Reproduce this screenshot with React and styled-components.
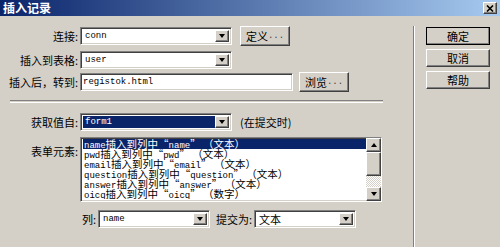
import styled, { createGlobalStyle } from "styled-components";

const GlobalStyle = createGlobalStyle`
  body {
    margin: 0;
    background: #d4d0c8;
  }
`;

const cjk = `"Noto Sans CJK SC", "Noto Sans", sans-serif`;
const mono = `"Liberation Mono", "Noto Sans CJK SC", monospace`;

const sunken = `
  border-style: solid;
  border-width: 1px;
  border-color: #808080 #ffffff #ffffff #808080;
  box-shadow: inset 1px 1px 0 #404040, inset -1px -1px 0 #d4d0c8;
`;

const raised = `
  border-style: solid;
  border-width: 1px;
  border-color: #ffffff #404040 #404040 #ffffff;
  box-shadow: inset -1px -1px 0 #808080, inset 1px 1px 0 #d4d0c8;
`;

const Window = styled.div`
  width: 500px;
  height: 247px;
  background: #d4d0c8;
  display: flex;
  flex-direction: column;
  overflow: hidden;
  font-family: ${cjk};
  font-size: 11px;
  color: #000;
`;

const TitleBar = styled.div`
  height: 16px;
  flex: none;
  display: flex;
  align-items: center;
  justify-content: space-between;
  padding: 0 3px 0 3px;
  background: linear-gradient(to right, #0a246a, #a6caf0);
`;

const Title = styled.span`
  color: #fff;
  font-weight: bold;
  font-size: 12px;
  line-height: 16px;
`;

const CloseBtn = styled.div`
  ${raised}
  width: 12px;
  height: 10px;
  background: #d4d0c8;
  display: flex;
  align-items: center;
  justify-content: center;
`;

const Body = styled.div`
  flex: 1;
  display: flex;
`;

const Main = styled.div`
  width: 413px;
  flex: none;
  padding-top: 10px;
  display: flex;
  flex-direction: column;
`;

const Row = styled.div`
  display: flex;
  align-items: ${(p) => (p.$top ? "flex-start" : "center")};
  margin-top: ${(p) => p.$mt || 0}px;
  padding-left: ${(p) => p.$indent || 0}px;
`;

const Label = styled.div`
  width: ${(p) => p.$w || 78}px;
  margin-right: ${(p) => (p.$mr === undefined ? 2 : p.$mr)}px;
  margin-left: ${(p) => p.$ml || 0}px;
  text-align: right;
  white-space: nowrap;
  line-height: 14px;
  padding-top: ${(p) => p.$pt || 0}px;
  flex: none;
`;

const Select = styled.div`
  ${sunken}
  width: ${(p) => p.$w}px;
  height: 18px;
  box-sizing: border-box;
  background: #fff;
  display: flex;
  align-items: stretch;
  padding: 2px;
  flex: none;
`;

const Value = styled.div`
  flex: 1;
  display: flex;
  align-items: center;
  padding-left: 2px;
  font-family: ${(p) => (p.$cjk ? cjk : mono)};
  font-size: ${(p) => (p.$cjk ? 11 : 9)}px;
  background: ${(p) => (p.$active ? "#0a246a" : "transparent")};
  color: ${(p) => (p.$active ? "#fff" : "#000")};
  white-space: nowrap;
  overflow: hidden;
`;

const ArrowBtn = styled.div`
  ${raised}
  width: 14px;
  box-sizing: border-box;
  background: #d4d0c8;
  display: flex;
  align-items: center;
  justify-content: center;
  flex: none;
`;

const Triangle = styled.span`
  width: 0;
  height: 0;
  border-left: 3.5px solid transparent;
  border-right: 3.5px solid transparent;
  ${(p) => (p.$up ? "border-bottom" : "border-top")}: 4px solid #000;
`;

const TextInput = styled.div`
  ${sunken}
  width: ${(p) => p.$w}px;
  height: 18px;
  box-sizing: border-box;
  background: #fff;
  display: flex;
  align-items: center;
  padding-left: 2px;
  font-family: ${mono};
  font-size: 9px;
  flex: none;
`;

const Button = styled.div`
  ${raised}
  width: ${(p) => p.$w || 64}px;
  height: ${(p) => p.$h || 20}px;
  margin-left: ${(p) => p.$ml || 0}px;
  box-sizing: border-box;
  background: #d4d0c8;
  display: flex;
  align-items: center;
  justify-content: center;
  font-size: 11px;
  flex: none;
  ${(p) =>
    p.$default &&
    `
    outline: 1px solid #000;
    outline-offset: -1px;
  `}
`;

const Dots = styled.span`
  font-family: ${mono};
  font-size: 9px;
  color: #404040;
`;

const HSeparator = styled.div`
  margin: 8px 0 0 10px;
  width: 373px;
  height: 1px;
  border-top: 1px solid #808080;
  border-bottom: 1px solid #ffffff;
`;

const Note = styled.span`
  white-space: nowrap;
  margin-left: 8px;
`;

const ListBox = styled.div`
  ${sunken}
  width: 302px;
  height: 65px;
  box-sizing: border-box;
  background: #fff;
  display: flex;
  padding: 1px 0 2px 2px;
  flex: none;
`;

const Items = styled.div`
  flex: 1;
  min-width: 0;
  overflow-x: hidden;
`;

const Item = styled.div`
  height: 10px;
  line-height: 10px;
  font-size: 10.5px;
  white-space: nowrap;
  padding-left: 1px;
  background: ${(p) => (p.$selected ? "#0a246a" : "transparent")};
  color: ${(p) => (p.$selected ? "#fff" : "#000")};
`;

const Mono = styled.span`
  font-family: ${mono};
  font-size: 9px;
  line-height: 10px;
`;

const Scrollbar = styled.div`
  width: 15px;
  margin-top: -1px;
  margin-bottom: -2px;
  display: flex;
  flex-direction: column;
  flex: none;
  background: repeating-conic-gradient(#ffffff 0 25%, #d4d0c8 0 50%) 0 0 / 2px 2px;
`;

const ScrollBtn = styled.div`
  ${raised}
  height: 14px;
  box-sizing: border-box;
  background: #d4d0c8;
  display: flex;
  align-items: center;
  justify-content: center;
  flex: none;
`;

const Track = styled.div`
  flex: 1;
  display: flex;
  flex-direction: column;
`;

const Thumb = styled.div`
  ${raised}
  height: 24px;
  box-sizing: border-box;
  background: #d4d0c8;
`;

const VSeparator = styled.div`
  width: 0;
  margin-top: 10px;
  border-left: 1px solid #808080;
  border-right: 1px solid #ffffff;
`;

const Side = styled.div`
  flex: 1;
  padding: 11px 0 0 11px;
  display: flex;
  flex-direction: column;
  gap: 4px;
`;

const Dropdown = ({ w, children, active, isCjk }) => (
  <Select $w={w}>
    <Value $active={active} $cjk={isCjk}>
      {children}
    </Value>
    <ArrowBtn>
      <Triangle />
    </ArrowBtn>
  </Select>
);

const fields = [
  ["name", "name", "文本"],
  ["pwd", "pwd", "文本"],
  ["email", "email", "文本"],
  ["question", "question", "文本"],
  ["answer", "answer", "文本"],
  ["oicq", "oicq", "数字"],
];

export default function App() {
  return (
    <Window>
      <GlobalStyle />
      <TitleBar>
        <Title>插入记录</Title>
        <CloseBtn>
          <svg width="8" height="7" viewBox="0 0 8 7">
            <path d="M1 0.5 L7 6.5 M7 0.5 L1 6.5" stroke="#000" strokeWidth="1.6" />
          </svg>
        </CloseBtn>
      </TitleBar>
      <Body>
        <Main>
          <Row>
            <Label>连接:</Label>
            <Dropdown w={152}>conn</Dropdown>
            <Button $w={50} $ml={8}>
              定义<Dots>...</Dots>
            </Button>
          </Row>
          <Row $mt={5}>
            <Label>插入到表格:</Label>
            <Dropdown w={152}>user</Dropdown>
          </Row>
          <Row $mt={3}>
            <Label>插入后，转到:</Label>
            <TextInput $w={213}>registok.html</TextInput>
            <Button $w={50} $ml={6}>
              浏览<Dots>...</Dots>
            </Button>
          </Row>
          <HSeparator />
          <Row $mt={10}>
            <Label>获取值自:</Label>
            <Dropdown w={152} active>
              form1
            </Dropdown>
            <Note>(在提交时)</Note>
          </Row>
          <Row $mt={6} $top>
            <Label $pt={7}>表单元素:</Label>
            <ListBox>
              <Items>
                {fields.map(([a, b, t], i) => (
                  <Item key={a} $selected={i === 0}>
                    <Mono>{a}</Mono>插入到列中“<Mono>{b}</Mono>” （{t}）
                  </Item>
                ))}
              </Items>
              <Scrollbar>
                <ScrollBtn>
                  <Triangle $up />
                </ScrollBtn>
                <Track>
                  <Thumb />
                </Track>
                <ScrollBtn>
                  <Triangle />
                </ScrollBtn>
              </Scrollbar>
            </ListBox>
          </Row>
          <Row $mt={8} $indent={80}>
            <Label $w={16} $mr={2}>
              列:
            </Label>
            <Dropdown w={112}>name</Dropdown>
            <Label $w={38} $mr={2} $ml={4}>
              提交为:
            </Label>
            <Dropdown w={102} isCjk>
              文本
            </Dropdown>
          </Row>
        </Main>
        <VSeparator />
        <Side>
          <Button $default $h={18}>
            确定
          </Button>
          <Button $h={18}>取消</Button>
          <Button $h={18}>帮助</Button>
        </Side>
      </Body>
    </Window>
  );
}
